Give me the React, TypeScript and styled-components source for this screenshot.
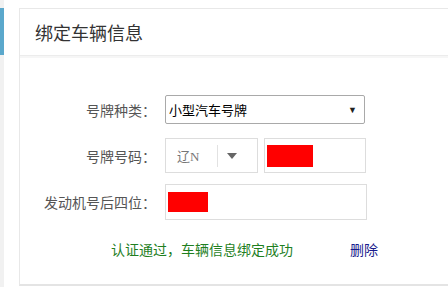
import React from 'react'
import styled, { createGlobalStyle } from 'styled-components'

const GlobalStyle = createGlobalStyle`
  html, body {
    margin: 0;
    padding: 0;
    background: #fff;
    overflow: hidden;
  }
  body {
    font-family: "Liberation Sans", "Noto Sans CJK SC", sans-serif;
  }
`

const App = () => {
  return (
    <Page>
      <GlobalStyle />
      <Sidebar>
        <Indicator />
      </Sidebar>
      <Card>
        <CardHeader>绑定车辆信息</CardHeader>
        <CardBody>
          <Row>
            <Label>号牌种类：</Label>
            <Select>
              <span>小型汽车号牌</span>
              <SelectArrow>▼</SelectArrow>
            </Select>
          </Row>

          <Row gap={14}>
            <Label>号牌号码：</Label>
            <Prefix>
              <span className='value'>辽N</span>
              <span className='divider' />
              <span className='caret' />
            </Prefix>
            <Field width={102}>
              <Mask width={46} height={22} />
            </Field>
          </Row>

          <Row gap={11}>
            <Label>发动机号后四位：</Label>
            <Field width={202} tall>
              <Mask width={40} height={20} />
            </Field>
          </Row>

          <Status>
            <span className='ok'>认证通过，车辆信息绑定成功</span>
            <a className='delete'>删除</a>
          </Status>
        </CardBody>
      </Card>
    </Page>
  )
}

const Page = styled.div`
  display: flex;
  gap: 15px;
  height: 287px;
  width: 448px;
`

const Sidebar = styled.div`
  width: 4px;
  flex-shrink: 0;
  background: #f1f1f1;
  padding-top: 8px;
  box-shadow: 12px 0 0 -11px #f4f4f4;
`

const Indicator = styled.div`
  height: 47px;
  background: #5ba8cc;
`

const Card = styled.div`
  margin-top: 8px;
  margin-bottom: 1px;
  width: 440px;
  flex-shrink: 0;
  border: 1px solid #e8e8e8;
  border-right: none;
  border-bottom: 2px solid #e4e4e4;
  display: flex;
  flex-direction: column;
`

const CardHeader = styled.div`
  height: 47px;
  box-sizing: border-box;
  padding-left: 15px;
  display: flex;
  align-items: center;
  font-size: 18px;
  color: #333;
  border-bottom: 1px solid #ececec;
  box-shadow: 0 2px 0 #f6f6f6;
`

const CardBody = styled.div`
  flex: 1;
  display: flex;
  flex-direction: column;
  padding-top: 39px;
`

const Row = styled.div<{ gap?: number }>`
  display: flex;
  align-items: center;
  margin-top: ${({ gap }) => gap ?? 0}px;
`

const Label = styled.div`
  width: 136px;
  text-align: right;
  font-size: 14px;
  color: #555;
  margin-right: 9px;
`

const Select = styled.div`
  width: 200px;
  height: 29px;
  box-sizing: border-box;
  border: 1px solid #a9a9a9;
  border-radius: 2px;
  display: flex;
  align-items: center;
  justify-content: space-between;
  padding: 0 7px 0 3px;
  font-size: 13px;
  color: #000;
`

const SelectArrow = styled.span`
  font-size: 9px;
  color: #222;
`

const Prefix = styled.div`
  width: 93px;
  height: 35px;
  box-sizing: border-box;
  border: 1px solid #ddd;
  display: flex;
  align-items: center;
  margin-right: 6px;

  .value {
    width: 51px;
    padding-left: 11px;
    box-sizing: border-box;
    font-size: 13px;
    color: #777;
    font-family: "Liberation Serif", "Noto Sans CJK SC", serif;
  }
  .divider {
    width: 1px;
    height: 22px;
    background: #e2e2e2;
  }
  .caret {
    margin-left: 9px;
    width: 0;
    height: 0;
    border-left: 5px solid transparent;
    border-right: 5px solid transparent;
    border-top: 6px solid #666;
  }
`

const Field = styled.div<{ width: number; tall?: boolean }>`
  width: ${({ width }) => width}px;
  height: ${({ tall }) => (tall ? 36 : 35)}px;
  box-sizing: border-box;
  border: 1px solid #ddd;
  display: flex;
  align-items: center;
  padding-left: 2px;
`

const Mask = styled.div<{ width: number; height: number }>`
  width: ${({ width }) => width}px;
  height: ${({ height }) => height}px;
  background: #ff0000;
`

const Status = styled.div`
  display: flex;
  align-items: center;
  margin-top: 19px;
  padding-left: 91px;
  font-size: 14px;

  .ok {
    color: #1f7f1f;
  }
  .delete {
    margin-left: 57px;
    color: #1a1a8c;
    cursor: pointer;
  }
`

export default App
